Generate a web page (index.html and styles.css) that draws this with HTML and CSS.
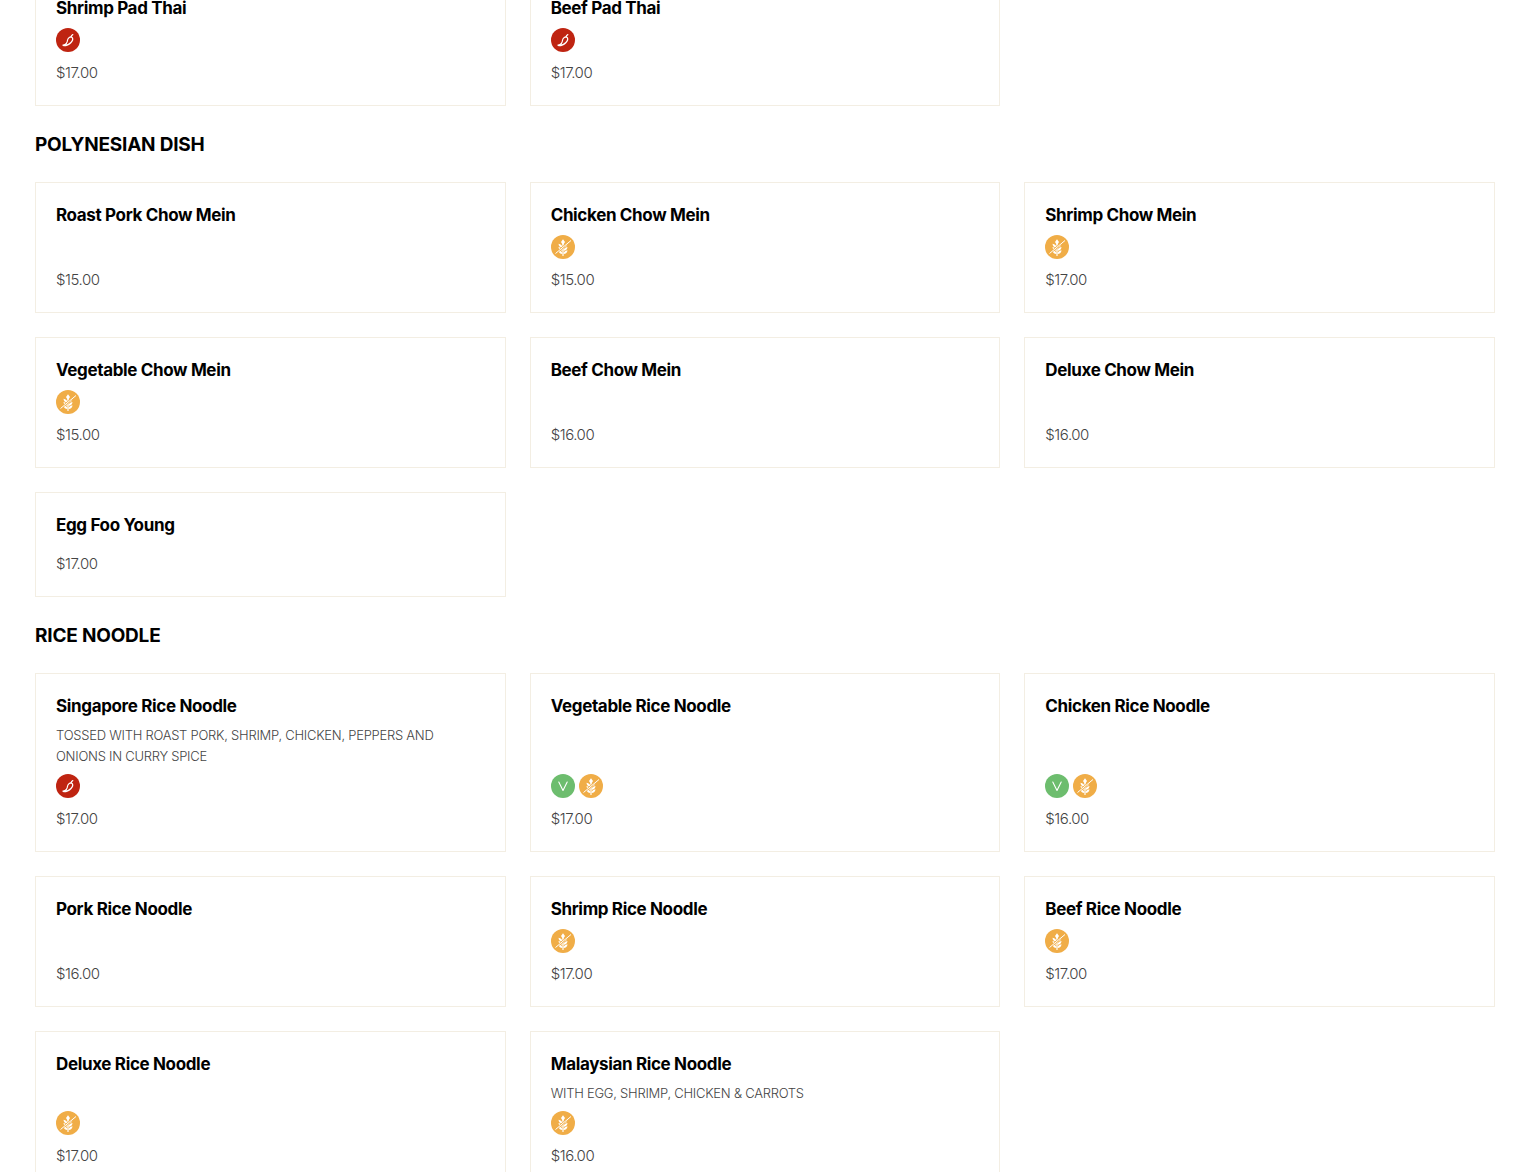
FILE: index.html
```html
<!DOCTYPE html>
<html lang="en">
<head>
<meta charset="utf-8">
<title>Menu</title>
<link rel="stylesheet" href="styles.css">
</head>
<body>
<svg class="defs" width="0" height="0" aria-hidden="true">
  <symbol id="chili" viewBox="0 0 24 24">
    <circle cx="12" cy="12" r="12" fill="#bf2411"/>
    <path d="M13.200 9.600c1-1 2.700-.9 3.300.3.600 1.300-.1 3.100-1.500 4.600-1.800 2-4.400 3.200-7.200 3.200-.7 0-1-.4-.7-.7.300-.3 1-.2 1.700-.5 1.500-.5 2.200-1.600 2.400-2.800.2-1.500.3-3 2-4.100z" fill="none" stroke="#fff" stroke-width="1.200" stroke-linejoin="round"/>
    <path d="M15 9.200c.1-1.200.7-2.100 1.800-2.600" fill="none" stroke="#fff" stroke-width="1.200" stroke-linecap="round"/>
  </symbol>
  <symbol id="wheat" viewBox="0 0 24 24">
    <circle cx="12" cy="12" r="12" fill="#f0ad47"/>
    <path d="M12 9v11.500" fill="none" stroke="#fff" stroke-width="1.200" stroke-linecap="round"/>
    <g fill="#fff">
      <path d="M12 4.200l2 2.700-2 3.300-2-3.300z"/>
      <path d="M11.500 12.600c-.2-2.200-1.600-3.500-4-3.800.1 2.400 1.600 3.600 4 3.800zM12.500 12.600c.2-2.200 1.600-3.500 4-3.800-.1 2.400-1.600 3.600-4 3.800z"/>
      <path d="M11.500 15.800c-.2-2.200-1.600-3.500-4-3.800.1 2.400 1.600 3.600 4 3.800zM12.500 15.800c.2-2.200 1.600-3.500 4-3.800-.1 2.400-1.600 3.600-4 3.800z"/>
      <path d="M11.500 19c-.2-2.200-1.600-3.500-4-3.800.1 2.400 1.600 3.600 4 3.800zM12.500 19c.2-2.200 1.600-3.500 4-3.800-.1 2.400-1.600 3.600-4 3.800z"/>
    </g>
    <path d="M4.500 18.500L20 5.500" fill="none" stroke="#f0ad47" stroke-width="2.200"/>
    <path d="M4.500 18.500L20 5.500" fill="none" stroke="#fff" stroke-width="1"/>
  </symbol>
  <symbol id="veg" viewBox="0 0 24 24">
    <circle cx="12" cy="12" r="12" fill="#6dbd6e"/>
    <path d="M7.800 8l4.200 8.500L16.200 8" fill="none" stroke="#fff" stroke-width="1.100" stroke-linecap="round" stroke-linejoin="round"/>
  </symbol>
</svg>
<main class="menu">
  <section class="section section--cut">
    <div class="grid">
      <article class="card"><h3 class="name">Shrimp Pad Thai</h3><div class="foot"><div class="tags"><svg class="tag"><use href="#chili"/></svg></div><p class="price">$17.00</p></div></article>
      <article class="card"><h3 class="name">Beef Pad Thai</h3><div class="foot"><div class="tags"><svg class="tag"><use href="#chili"/></svg></div><p class="price">$17.00</p></div></article>
    </div>
  </section>
  <section class="section">
    <h2 class="heading">POLYNESIAN DISH</h2>
    <div class="grid">
      <article class="card"><h3 class="name">Roast Pork Chow Mein</h3><div class="foot"><p class="price">$15.00</p></div></article>
      <article class="card"><h3 class="name">Chicken Chow Mein</h3><div class="foot"><div class="tags"><svg class="tag"><use href="#wheat"/></svg></div><p class="price">$15.00</p></div></article>
      <article class="card"><h3 class="name">Shrimp Chow Mein</h3><div class="foot"><div class="tags"><svg class="tag"><use href="#wheat"/></svg></div><p class="price">$17.00</p></div></article>
      <article class="card"><h3 class="name">Vegetable Chow Mein</h3><div class="foot"><div class="tags"><svg class="tag"><use href="#wheat"/></svg></div><p class="price">$15.00</p></div></article>
      <article class="card"><h3 class="name">Beef Chow Mein</h3><div class="foot"><p class="price">$16.00</p></div></article>
      <article class="card"><h3 class="name">Deluxe Chow Mein</h3><div class="foot"><p class="price">$16.00</p></div></article>
      <article class="card card--plain"><h3 class="name">Egg Foo Young</h3><div class="foot"><p class="price">$17.00</p></div></article>
    </div>
  </section>
  <section class="section">
    <h2 class="heading">RICE NOODLE</h2>
    <div class="grid">
      <article class="card"><h3 class="name">Singapore Rice Noodle</h3><p class="desc">TOSSED WITH ROAST PORK, SHRIMP, CHICKEN, PEPPERS AND ONIONS IN CURRY SPICE</p><div class="foot"><div class="tags"><svg class="tag"><use href="#chili"/></svg></div><p class="price">$17.00</p></div></article>
      <article class="card"><h3 class="name">Vegetable Rice Noodle</h3><div class="foot"><div class="tags"><svg class="tag"><use href="#veg"/></svg><svg class="tag"><use href="#wheat"/></svg></div><p class="price">$17.00</p></div></article>
      <article class="card"><h3 class="name">Chicken Rice Noodle</h3><div class="foot"><div class="tags"><svg class="tag"><use href="#veg"/></svg><svg class="tag"><use href="#wheat"/></svg></div><p class="price">$16.00</p></div></article>
      <article class="card"><h3 class="name">Pork Rice Noodle</h3><div class="foot"><p class="price">$16.00</p></div></article>
      <article class="card"><h3 class="name">Shrimp Rice Noodle</h3><div class="foot"><div class="tags"><svg class="tag"><use href="#wheat"/></svg></div><p class="price">$17.00</p></div></article>
      <article class="card"><h3 class="name">Beef Rice Noodle</h3><div class="foot"><div class="tags"><svg class="tag"><use href="#wheat"/></svg></div><p class="price">$17.00</p></div></article>
      <article class="card"><h3 class="name">Deluxe Rice Noodle</h3><div class="foot"><div class="tags"><svg class="tag"><use href="#wheat"/></svg></div><p class="price">$17.00</p></div></article>
      <article class="card"><h3 class="name">Malaysian Rice Noodle</h3><p class="desc">WITH EGG, SHRIMP, CHICKEN &amp; CARROTS</p><div class="foot"><div class="tags"><svg class="tag"><use href="#wheat"/></svg></div><p class="price">$16.00</p></div></article>
    </div>
  </section>
</main>
</body>
</html>
```
FILE: styles.css
```css
html, body {
  margin: 0;
  height: 1172px;
  overflow: hidden;
  background: #fff;
}
body {
  font-family: Inter, "Noto Sans", sans-serif;
  color: #000;
}
.defs { display: block; height: 0; }
.menu {
  display: flex;
  flex-direction: column;
  gap: 24px;
  padding: 0 35px;
  margin-top: -25px;
}
.heading {
  margin: 0 0 23px;
  padding-top: 1px;
  font-size: 19px;
  line-height: 28px;
  font-weight: 700;
  letter-spacing: -0.2px;
}
.grid {
  display: grid;
  grid-template-columns: repeat(3, minmax(0, 1fr));
  gap: 24px;
}
.card {
  display: flex;
  flex-direction: column;
  border: 1px solid #f3eee3;
  padding: 20px 20px 22px;
}
.name {
  margin: 0 0 8px;
  font-size: 17px;
  line-height: 24px;
  font-weight: 700;
  letter-spacing: -0.35px;
}
.desc {
  margin: -1px 0 7.75px;
  font-size: 13px;
  line-height: 20.5px;
  font-weight: 300;
  color: #444;
  letter-spacing: -0.25px;
}
.foot { margin-top: auto; }
.card--plain .foot { margin-top: 9px; }
.tags {
  display: flex;
  gap: 4px;
  margin-bottom: 11px;
}
.tag { display: block; width: 24px; height: 24px; }
.price {
  margin: 0;
  font-size: 15px;
  line-height: 20px;
  font-weight: 300;
  color: #444;
  letter-spacing: -0.45px;
}
```
